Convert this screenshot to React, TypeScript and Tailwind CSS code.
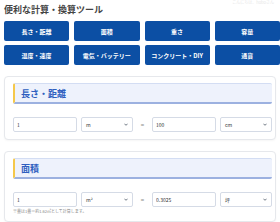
import React, { useState } from "react";

const font = { fontFamily: '"Noto Sans CJK JP", "Noto Sans", sans-serif' };

const categories = [
  "長さ・距離",
  "面積",
  "重さ",
  "容量",
  "温度・速度",
  "電気・バッテリー",
  "コンクリート・DIY",
  "通貨",
];

const Chevron = () => (
  <svg
    viewBox="0 0 10 6"
    className="w-[4px] h-[3px] text-gray-600"
    fill="none"
    stroke="currentColor"
    strokeWidth="2"
  >
    <path d="M1 1l4 4 4-4" />
  </svg>
);

const UnitSelect = ({ value }: { value: string }) => (
  <div className="w-[52px] h-[15px] flex items-center justify-between px-[4px] border border-[#d5dbe6] rounded-[2px] bg-white text-[5px] text-[#333]">
    <span>{value}</span>
    <Chevron />
  </div>
);

const NumberBox = ({ value }: { value: string }) => (
  <input
    type="text"
    value={value}
    readOnly
    className="w-[66px] h-[15px] px-[3px] border border-[#d5dbe6] rounded-[2px] bg-white text-[5px] text-[#333] outline-none"
    style={font}
  />
);

const Section = ({
  title,
  from,
  fromUnit,
  to,
  toUnit,
  note,
}: {
  title: string;
  from: string;
  fromUnit: string;
  to: string;
  toUnit: string;
  note?: string;
}) => (
  <div className="border border-[#e6e8ec] rounded-[4px] bg-white pt-[6px] pb-[7px] pl-[8px] pr-[3px] shadow-[0_1px_2px_rgba(0,0,0,0.04)]">
    {/* header */}
    <div className="h-[21px] flex items-center pl-[6px] bg-[#eef2fc] border-l-2 border-l-[#f5c84a] border-t border-t-[#d3ddf3] border-b-2 border-b-[#9cb1e0] rounded-[2px]">
      <span className="text-[9px] font-bold text-[#2f5fbf] leading-none">{title}</span>
    </div>

    {/* inputs */}
    <div className="flex items-center mt-[13px]">
      <NumberBox value={from} />
      <div className="ml-[4px]">
        <UnitSelect value={fromUnit} />
      </div>
      <div className="w-[20px] text-center text-[6px] text-[#888]">=</div>
      <NumberBox value={to} />
      <div className="ml-[4px]">
        <UnitSelect value={toUnit} />
      </div>
    </div>
    {note && <p className="mt-[2px] text-[4px] leading-[5px] text-[#888]">{note}</p>}
  </div>
);

const App = () => {
  const [active] = useState(0);

  return (
    <div className="w-[280px] min-h-[222px] bg-white px-[4px] overflow-hidden" style={font}>
      <div className="h-[5px] text-right text-[4px] leading-[5px] text-[#e8e8e8] pr-[2px]">
        こんにちは、hoboさん
      </div>
      <h1 className="text-[9px] leading-[10px] font-bold text-[#444]">便利な計算・換算ツール</h1>

      {/* category buttons */}
      <div className="grid grid-cols-4 gap-x-[5px] gap-y-[4px] mt-[6px] w-[276px]">
        {categories.map((c, i) => (
          <button
            key={c}
            className={
              "h-[20px] rounded-[2px] bg-[#0c4fa4] text-white text-[6px] font-bold " +
              (i === active ? "" : "")
            }
            style={font}
          >
            {c}
          </button>
        ))}
      </div>

      <div className="mt-[11px] flex flex-col gap-[11px]">
        <Section title="長さ・距離" from="1" fromUnit="m" to="100" toUnit="cm" />
        <Section
          title="面積"
          from="1"
          fromUnit="m²"
          to="0.3025"
          toUnit="坪"
          note="※畳は1畳＝約1.62㎡として計算します。"
        />
      </div>
    </div>
  );
};

export default App;
